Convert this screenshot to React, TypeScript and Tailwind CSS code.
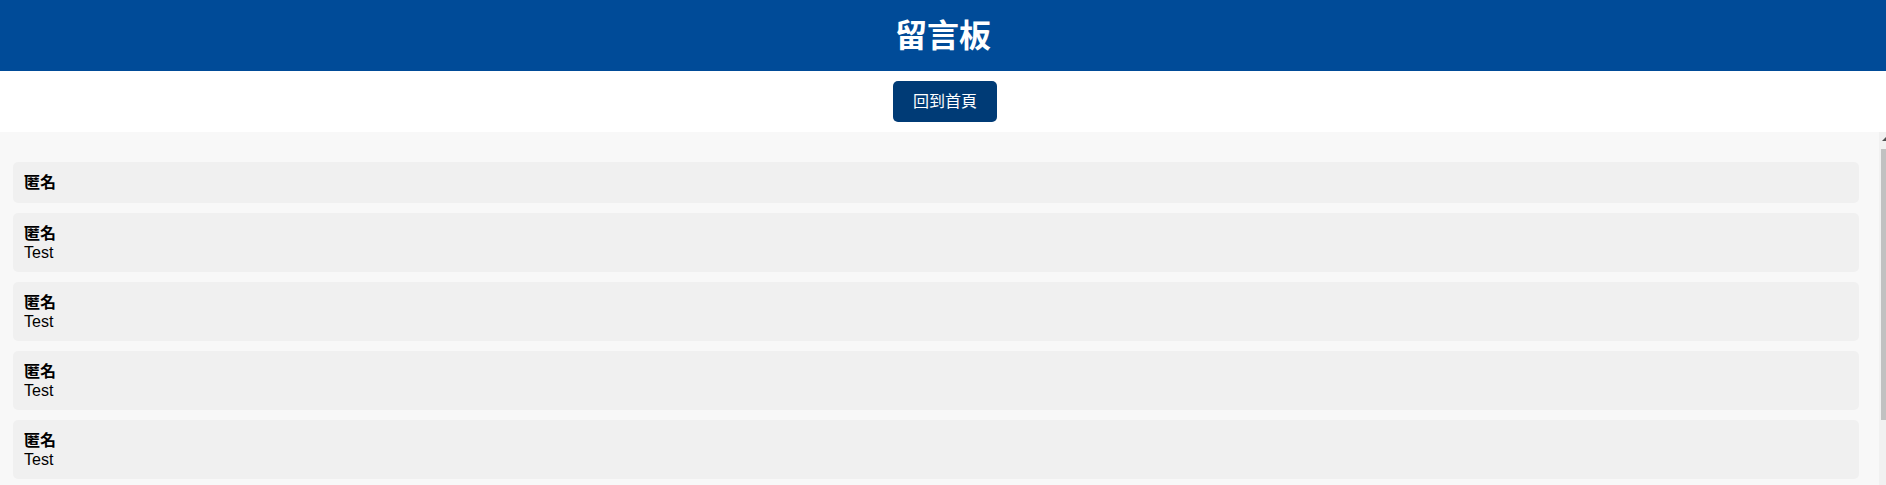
const messages = [
  { name: '匿名', text: '' },
  { name: '匿名', text: 'Test' },
  { name: '匿名', text: 'Test' },
  { name: '匿名', text: 'Test' },
  { name: '匿名', text: 'Test' },
  { name: '匿名', text: 'Test' },
];

export default function App() {
  return (
    <div
      className="h-screen w-full overflow-hidden flex flex-col bg-white text-black"
      style={{ fontFamily: '"Liberation Sans", "Noto Sans CJK TC", sans-serif' }}
    >
      <header className="h-[71px] shrink-0 bg-[#004b98] flex items-center justify-center">
        <h1 className="text-[32px] font-bold text-white leading-none">留言板</h1>
      </header>

      <div className="h-[61px] shrink-0 flex items-center justify-center pl-[4px]">
        <button className="h-[41px] px-5 rounded-[5px] bg-[#003b76] text-white text-[16px]">
          回到首頁
        </button>
      </div>

      <div className="flex-1 min-h-0 flex bg-[#f8f8f8]">
        <div className="flex-1 min-w-0 overflow-hidden pt-[30px] pl-[13px] pr-[20px]">
          <div className="flex flex-col gap-[10px]">
            {messages.map((m, i) => (
              <div key={i} className="bg-[#f0f0f0] rounded-[5px] px-[11px] py-[10px]">
                <div className="font-bold text-[16px] leading-[21px]">{m.name}</div>
                {m.text && <div className="text-[16px] leading-[18px]">{m.text}</div>}
              </div>
            ))}
          </div>
        </div>

        {/* scrollbar, cut at the right edge */}
        <div className="w-[7px] shrink-0 bg-[#f1f1f1] flex flex-col">
          <div className="h-[15px] flex items-center justify-end pr-0">
            <svg width="5" height="4" viewBox="0 0 5 4" className="mb-[2px]">
              <path d="M5 0 L5 4 L1 4 Z" fill="#505050" />
            </svg>
          </div>
          <div className="mt-[2px] ml-[2px] h-[271px] bg-[#c1c1c1]" />
        </div>
      </div>
    </div>
  );
}
